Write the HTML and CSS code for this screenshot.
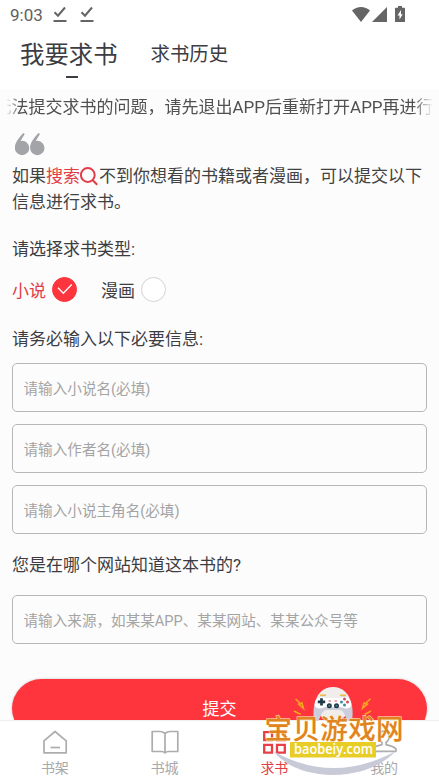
FILE: index.html
```html
<!DOCTYPE html>
<html lang="zh-CN">
<head>
<meta charset="utf-8">
<title>我要求书</title>
<link rel="stylesheet" href="styles.css">
</head>
<body>
<div class="app">
  <div class="status">
    <span class="time">9:03</span>
    <svg class="dl" width="14" height="16" viewBox="0 0 14 16"><path d="M1.500 6.200 5 9.700 12 1.500" fill="none" stroke="#656565" stroke-width="2"/><path d="M.5 15H13.500" stroke="#656565" stroke-width="2"/></svg>
    <svg class="dl" width="14" height="16" viewBox="0 0 14 16"><path d="M1.500 6.200 5 9.700 12 1.500" fill="none" stroke="#656565" stroke-width="2"/><path d="M.5 15H13.500" stroke="#656565" stroke-width="2"/></svg>
    <svg class="sys" width="56" height="18" viewBox="0 0 56 18" fill="#656565"><path d="M0 4.600C5-.1 13-.1 18 4.600L9 16Z"/><path d="M35 1V16H20Z"/><path d="M46 1.800V0h4v1.800h2.500q.5 0 .5.6V15.400q0 .6-.6.6H43.600q-.6 0-.6-.6V2.400q0-.6.6-.6Z"/><path d="M49 4 45.500 9.500H47.500V13.500L50.700 8.300H49Z" fill="#fff"/></svg>
  </div>
  <nav class="tabs">
    <span class="tab active">我要求书</span>
    <span class="tab">求书历史</span>
  </nav>
  <main class="page">
    <div class="notice"><span>无法提交求书的问题，请先退出APP后重新打开APP再进行求书</span></div>
    <svg class="quote" width="30" height="23" viewBox="0 0 30 23" fill="#a3a4a7"><circle cx="7.100" cy="15" r="7.200"/><circle cx="22.300" cy="15" r="7.200"/><path d="M0 14C.4 9 4 5 8.200.1L9.800 1.100C8 4 6.700 6.500 5 9L2 15ZM15.200 14C15.600 9 19.200 5 23.400.1L25 1.100C23.200 4 21.900 6.500 20.200 9L17.200 15Z"/></svg>
    <p class="intro">如果<span class="red">搜索</span><svg class="search" width="18" height="19" viewBox="0 0 18 19" fill="none" stroke="#e23d46" stroke-width="2"><circle cx="7.800" cy="8" r="6.900"/><path d="M12.300 12.800 17.200 17.700"/></svg>不到你想看的书籍或者漫画，可以提交以下信息进行求书。</p>
    <h2 class="label kind">请选择求书类型:</h2>
    <div class="choices">
      <span class="red">小说</span><span class="radio on"><svg width="16" height="12" viewBox="0 0 16 12"><path d="M1 4.800 6.300 10.300 14.700 1.500" fill="none" stroke="#fff" stroke-width="1.300"/></svg></span>
      <span class="second">漫画</span><span class="radio"></span>
    </div>
    <h2 class="label need">请务必输入以下必要信息:</h2>
    <div class="fields">
      <div class="field">请输入小说名(必填)</div>
      <div class="field">请输入作者名(必填)</div>
      <div class="field">请输入小说主角名(必填)</div>
    </div>
    <h2 class="label site">您是在哪个网站知道这本书的?</h2>
    <div class="field">请输入来源，如某某APP、某某网站、某某公众号等</div>
    <div class="submit">提交</div>
  </main>
  <footer class="bar">
    <div class="item"><svg width="28" height="26" viewBox="0 0 28 26" fill="none" stroke="#adadaf" stroke-width="1.700" stroke-linejoin="round"><path d="M3 10.800 14 1.500 25.200 10.800V22.800H3Z"/><path d="M9.500 17.500H19"/></svg><span>书架</span></div>
    <div class="item"><svg width="28" height="26" viewBox="0 0 28 26" fill="none" stroke="#adadaf" stroke-width="1.700" stroke-linejoin="round"><path d="M14 3.500Q11.500 1.500 9 1.500H1.200V21.500H10.500Q12.800 21.500 14 22.800Q15.200 21.500 17.500 21.500H26.800V1.500H19Q16.500 1.500 14 3.500V22.800"/></svg><span>书城</span></div>
    <div class="item on"><svg width="28" height="26" viewBox="-.7 0 28 26" fill="none" stroke="#ea3e47" stroke-width="2.300"><path d="M3.500 2.200H11.300V10H3.500ZM16.300 2.200H24.100V10H16.300ZM3.500 14.800H11.300V22.600H3.500ZM16.300 14.800H24.100V22.600H16.300Z"/></svg><span>求书</span></div>
    <div class="item"><svg width="28" height="26" viewBox="0 0 28 26" fill="none" stroke="#adadaf" stroke-width="1.700" stroke-linejoin="round"><path d="M14 1.200C10 1.200 8.500 4 8.800 7 9 9.600 10.500 11.500 12 12.500V14.700Q4 16.500 2 19V21.300H26V19Q24 16.500 16 14.700V12.500C17.500 11.500 19 9.600 19.200 7 19.500 4 18 1.200 14 1.200Z"/></svg><span>我的</span></div>
  </footer>
  <div class="brand">
    <svg width="150" height="94" viewBox="260 684 150 94">
      <path d="M273 751Q333 785 396 751Q374 774 333 775Q292 774 273 751Z" fill="#c9cad8"/>
      <ellipse cx="333" cy="704" rx="17.500" ry="17" fill="#f1edea"/>
      <path d="M314 721C313 714 313.500 705 315.500 701C318 695 325 696 328 698H338C342 695 348 696 350.500 701C353 706 353 715 352 721H348C345 718 345 710 339 710H327C321 710 321 718 318 721Z" fill="#cdcedb"/>
      <path d="M315 706C314 702 316 697 321 697Q325 696.500 328 698H338Q341 696.500 345 697C350 697 352 702 351 706C349 710 343 708 341 707H325C323 708 317 710 315 706Z" fill="#fff"/>
      <path d="M320 695.300H326M340 695.300H346" stroke="#edbb45" stroke-width="1.500"/>
      <path d="M321.500 698.300V705.500M317.800 701.900H325.200" stroke="#203746" stroke-width="2.700"/>
      <g fill="#203746"><circle cx="329.300" cy="705.700" r="2.500"/><circle cx="336.500" cy="705.700" r="2.500"/></g>
      <g fill="#44869a"><circle cx="329.300" cy="705.700" r="1"/><circle cx="336.500" cy="705.700" r="1"/></g>
      <path d="M328.500 701H331M334.500 701H337" stroke="#d74d58"/>
      <g fill="#d74d58"><circle cx="344.500" cy="699" r="1.500"/><circle cx="347.500" cy="702" r="1.500"/></g>
      <g fill="#3a8ba3"><circle cx="344.500" cy="705" r="1.500"/><circle cx="341.500" cy="702" r="1.500"/></g>
      <path d="M295.500 699 300 703.200 298.500 704.200 303.500 708.500 302 703 299.500 704.500M370.500 698.800 366 703 367.500 704 362.500 708.300 364 702.800 366.500 704.300M294 711 297.800 713 300.800 714.200M371 711 367.500 713 364.500 714.200" fill="none" stroke="#f3a51e" stroke-width="1.500"/>
      <text class="brand-name" x="264.500" y="739" textLength="139">宝贝游戏网</text>
      <rect x="290" y="742" width="86" height="15.500" fill="#e9cd27"/>
      <text class="brand-url" x="294" y="754" textLength="79" lengthAdjust="spacingAndGlyphs">baobeiy.com</text>
    </svg>
  </div>
</div>
</body>
</html>
```
FILE: styles.css
```css
* { box-sizing: border-box; }
body { margin: 0; background: #fff; color: #3c3c43; font-family: Roboto, "Noto Sans CJK SC", sans-serif; }
svg { display: block; flex: none; }
.app { position: relative; width: 439px; height: 780px; overflow: hidden; display: flex; flex-direction: column; }
.status { height: 30px; flex: none; display: flex; align-items: flex-start; padding: 6px 31px 0 10px; color: #606060; }
.time { width: 43px; font-size: 17px; line-height: 18px; }
.dl { margin-right: 13px; }
.sys { margin-left: auto; }
.tabs { height: 59px; flex: none; display: flex; padding-left: 20px; gap: 33px; }
.tab { font-size: 19.4px; line-height: 50px; }
.tab.active { font-size: 24.4px; display: flex; flex-direction: column; align-items: center; }
.tab.active::after { content: ""; width: 12px; height: 2px; margin: -4px 0 0 6px; background: #3c3c43; }
.page { flex: 1; min-height: 0; overflow: hidden; background: #fcfcfc; padding: 0 12px; font-size: 17px; }
.notice { margin: 0 -6px; height: 36px; line-height: 37px; overflow: hidden; white-space: nowrap; color: #505050; mask-image: linear-gradient(90deg, transparent, #000 14px, #000 calc(100% - 20px), transparent); }
.notice span { margin-left: -11.5px; }
.quote { margin: 8px 0 0 3px; }
.intro { margin: 7px 0 0; line-height: 26px; color: #424242; height: 52px; }
.red { color: #e23d46; }
.search { display: inline-block; vertical-align: -4px; margin-right: 1px; }
.label { margin: 0; font-size: 17px; font-weight: 400; line-height: 26px; }
.kind { margin-top: 21px; }
.choices { display: flex; align-items: center; height: 26px; margin-top: 14px; }
.radio { width: 25px; height: 25px; border-radius: 50%; border: 1px solid #d3d3d3; background: #fff; display: flex; align-items: center; justify-content: center; margin-left: 6px; }
.radio.on { background: #ff353d; border-color: #ff353d; }
.second { margin-left: 24px; }
.need { margin-top: 24px; }
.fields { display: flex; flex-direction: column; gap: 12px; margin-top: 11px; }
.field { height: 49px; border: 1px solid #b7b7b7; border-radius: 5px; padding-left: 10.5px; font-size: 14.6px; line-height: 50px; color: #a4a4a4; }
.site { margin: 18px 0 17px; }
.submit { height: 59px; margin-top: 35px; border-radius: 30px; background: #ff353d; box-shadow: 0 0 3px #0003; color: #fff; text-align: center; line-height: 60px; }
.bar { height: 60px; flex: none; border-top: 1px solid #eee; background: #fff; display: flex; color: #a9a9ab; font-size: 14px; line-height: 20px; }
.item { flex: 1; display: flex; flex-direction: column; align-items: center; padding-top: 9px; }
.item span { margin-top: 2px; }
.item.on { color: #e23d46; }
.brand { position: absolute; left: 260px; top: 684px; }
.brand-name { font: 500 27.5px "Noto Sans CJK SC", sans-serif; fill: #df8420; stroke: #fff0c7; stroke-width: .8px; paint-order: stroke; }
.brand-url { font: 600 14.5px "Open Sans", sans-serif; fill: #fff; }
```
